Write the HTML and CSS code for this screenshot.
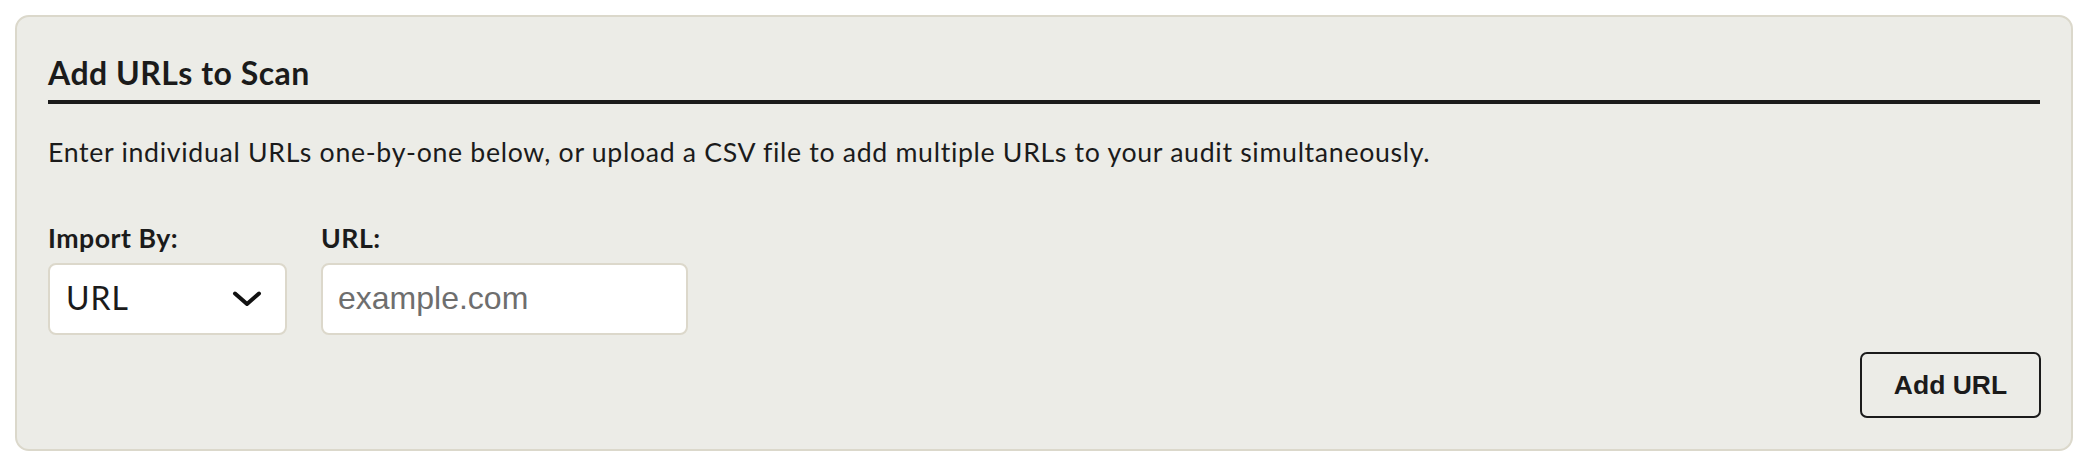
FILE: index.html
```html
<!DOCTYPE html>
<html lang="en">
<head>
<meta charset="utf-8">
<title>Add URLs to Scan</title>
<link rel="stylesheet" href="styles.css">
</head>
<body>
<section class="card">
  <h2 class="card-title">Add URLs to Scan</h2>
  <p class="card-intro">Enter individual URLs one-by-one below, or upload a CSV file to add multiple URLs to your audit simultaneously.</p>
  <div class="form-row">
    <div class="field">
      <label class="field-label" for="import-by">Import By:</label>
      <div class="select-wrap">
        <select id="import-by" class="select">
          <option>URL</option>
          <option>CSV</option>
        </select>
        <svg class="chevron" width="30" height="16" viewBox="0 0 30 16" aria-hidden="true">
          <polyline points="3,2.5 15,13 27,2.5" fill="none" stroke="#111" stroke-width="4" stroke-linecap="round" stroke-linejoin="round"/>
        </svg>
      </div>
    </div>
    <div class="field">
      <label class="field-label" for="url">URL:</label>
      <input id="url" class="text-input" type="text" placeholder="example.com">
    </div>
  </div>
  <div class="actions">
    <button class="btn" type="button">Add URL</button>
  </div>
</section>
</body>
</html>
```

FILE: styles.css
```css
html, body {
  margin: 0;
  background: #ffffff;
}

body {
  padding: 15px 17px 0 15px;
  font-family: "Lato", "Open Sans", sans-serif;
  color: #1b1b1b;
}

.card {
  background: #ecece7;
  border: 2px solid #dbd8cb;
  border-radius: 14px;
  padding: 31px;
}

.card-title {
  margin: 6px 0 0;
  font-size: 32px;
  line-height: 38px;
  font-weight: 700;
  letter-spacing: 0.5px;
  padding-bottom: 8px;
  border-bottom: 4px solid #1b1b1b;
}

.card-intro {
  margin: 28px 0 0;
  font-size: 26.7px;
  line-height: 40px;
  letter-spacing: 0.68px;
}

.form-row {
  display: flex;
  gap: 34px;
  margin-top: 50px;
}

.field {
  display: flex;
  flex-direction: column;
}

.field-label {
  font-size: 26.7px;
  line-height: 32px;
  font-weight: 700;
  letter-spacing: 0.5px;
  margin-bottom: 9px;
}

.select-wrap {
  position: relative;
  width: 239px;
}

.select {
  appearance: none;
  -webkit-appearance: none;
  width: 100%;
  height: 72px;
  box-sizing: border-box;
  border: 2px solid #dcd8cb;
  border-radius: 8px;
  background: #ffffff;
  font-family: "Lato", "Open Sans", sans-serif;
  font-size: 32px;
  letter-spacing: 1px;
  color: #1b1b1b;
  padding: 0 16px 3px;
  margin: 0;
}

.chevron {
  position: absolute;
  right: 25px;
  top: 28px;
  pointer-events: none;
}

.text-input {
  width: 367px;
  height: 72px;
  box-sizing: border-box;
  border: 2px solid #dcd8cb;
  border-radius: 8px;
  background: #ffffff;
  font-family: "Liberation Sans", Arial, sans-serif;
  font-size: 32px;
  color: #1b1b1b;
  padding: 0 15px 2px;
  margin: 0;
}

.text-input::placeholder {
  color: #6e6e6e;
}

.actions {
  display: flex;
  justify-content: flex-end;
  margin-top: 17px;
}

.btn {
  height: 66px;
  width: 181px;
  box-sizing: border-box;
  border: 2px solid #1b1b1b;
  border-radius: 7px;
  background: transparent;
  font-family: "Liberation Sans", Arial, sans-serif;
  font-size: 26.5px;
  font-weight: 700;
  color: #1b1b1b;
  padding: 0;
  margin-right: -1px;
}
```
